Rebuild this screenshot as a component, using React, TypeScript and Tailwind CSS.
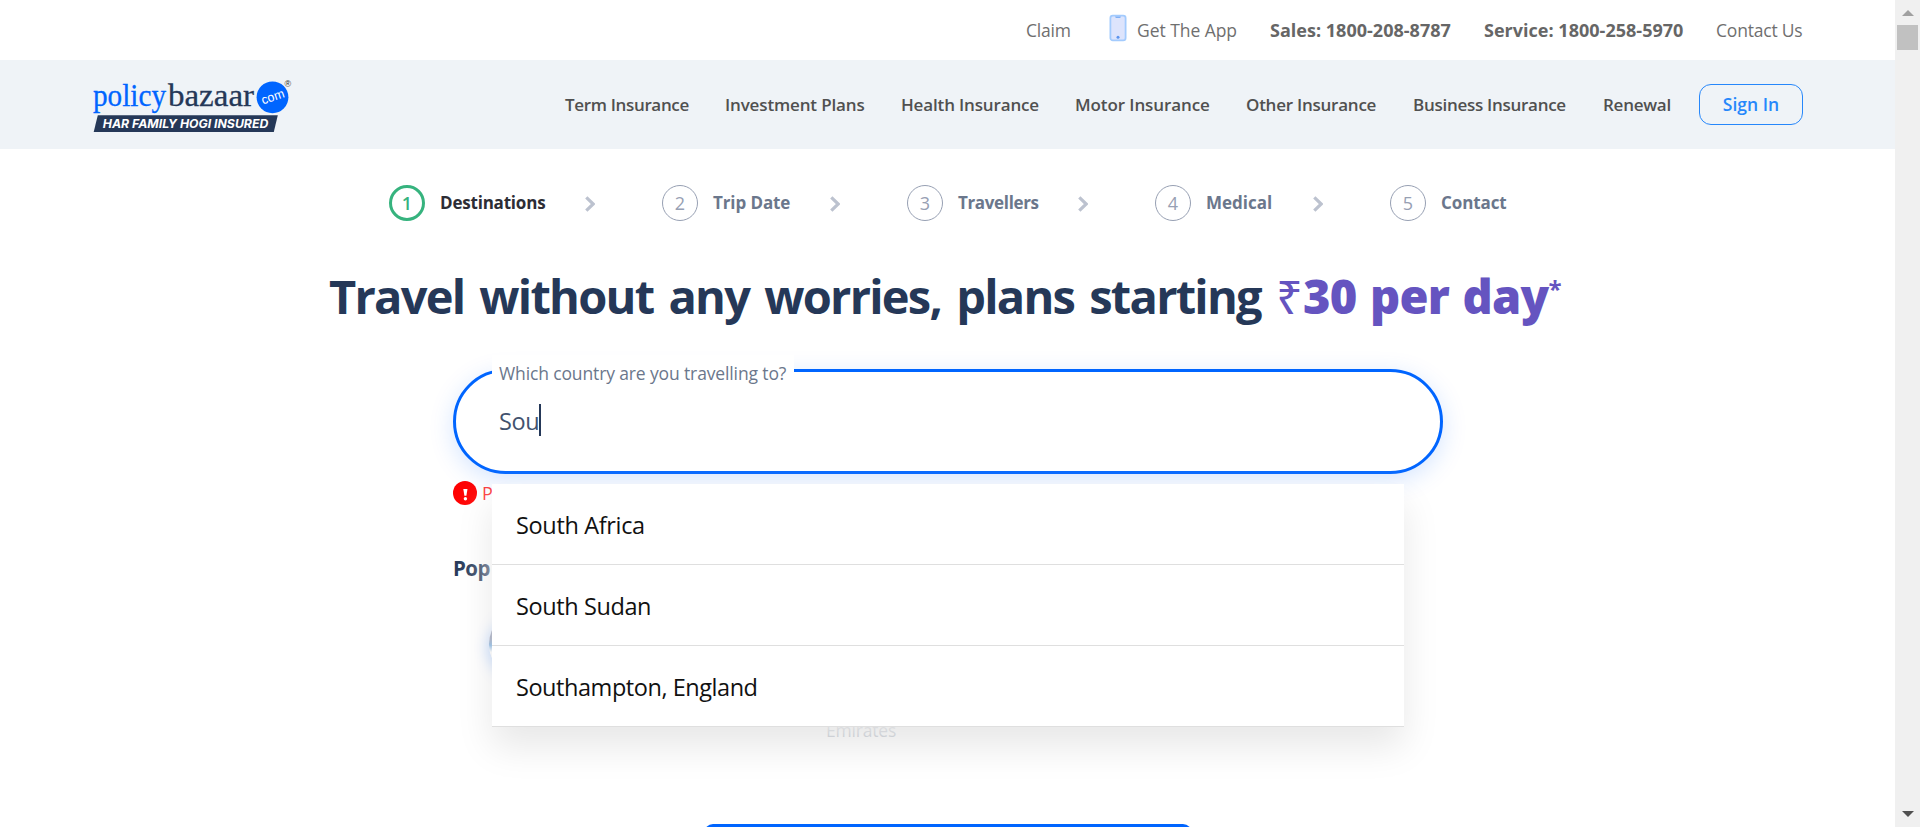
import React from "react";

const navItems = [
  { label: "Term Insurance", box: "w-[160px] tracking-[-0.34px]" },
  { label: "Investment Plans", box: "w-[176px] tracking-[-0.15px]" },
  { label: "Health Insurance", box: "w-[174px] tracking-[-0.15px]" },
  { label: "Motor Insurance", box: "w-[171px] tracking-[-0.1px]" },
  { label: "Other Insurance", box: "w-[167px] tracking-[-0.24px]" },
  { label: "Business Insurance", box: "w-[190px] tracking-[-0.28px]" },
  { label: "Renewal", box: "w-[96px] tracking-[-0.25px]" },
];

const steps = [
  { label: "Destinations", box: "w-[273px]", track: "tracking-[-0.2px]" },
  { label: "Trip Date", box: "w-[245px]", track: "tracking-[-0.1px]" },
  { label: "Travellers", box: "w-[248px]", track: "tracking-[-0.35px]" },
  { label: "Medical", box: "w-[235px]", track: "tracking-[0px]" },
  { label: "Contact", box: "w-[160px]", track: "tracking-[-0.1px]" },
];

const options = [
  { label: "South Africa", track: "tracking-[-0.35px]" },
  { label: "South Sudan", track: "tracking-[-0.4px]" },
  { label: "Southampton, England", track: "tracking-[-0.45px]" },
];

function Logo() {
  return (
    <svg className="block h-[60px] w-[200px]" viewBox="92 76 200 60">
      <text x="93" y="105.5" fontFamily="Liberation Serif, serif" fontSize="31" fill="#0065ff" stroke="#0065ff" strokeWidth="0.3" textLength="73" lengthAdjust="spacingAndGlyphs">policy</text>
      <text x="168" y="105.5" fontFamily="Liberation Serif, serif" fontSize="31" fill="#253858" stroke="#253858" strokeWidth="0.3" textLength="86" lengthAdjust="spacingAndGlyphs">bazaar</text>
      <circle cx="272.5" cy="97.3" r="15.9" fill="#0065ff" />
      <text x="272.9" y="101" textAnchor="middle" fontFamily="Liberation Sans, sans-serif" fontSize="12.5" fill="#ffffff" textLength="23.5" lengthAdjust="spacingAndGlyphs" transform="rotate(-19 272.5 97.3)">com</text>
      <text x="287.8" y="86.5" textAnchor="middle" fontFamily="Liberation Sans, sans-serif" fontSize="9" fill="#333333">®</text>
      <path d="M97.8 115.3H277.8L273.8 132H93.7Z" fill="#253858" />
      <text x="102.8" y="128.1" fontFamily="Inter, sans-serif" fontSize="12" fontWeight="700" fontStyle="italic" fill="#ffffff" textLength="165.5" lengthAdjust="spacingAndGlyphs">HAR FAMILY HOGI INSURED</text>
    </svg>
  );
}

function PhoneIcon() {
  return (
    <svg className="block h-7 w-[18px]" viewBox="0 0 18 28">
      <rect x="1.4" y="1.6" width="15.2" height="24.8" rx="2.4" fill="#dde4fc" stroke="#a3cbfd" strokeWidth="1.8" />
      <path d="M6 2.4h6l-.8 1.7H6.800Z" fill="#7fb0f5" />
      <circle cx="9" cy="23.300" r="1.500" fill="#5b94ee" />
    </svg>
  );
}

function TopBar() {
  return (
    <div className="flex h-[60px] items-center pl-[1026px] text-[17.5px] text-[#6f6f6f]">
      <span className="w-[83px] tracking-[-0.2px]">Claim</span>
      <span className="mt-[-4px] w-[28px]"><PhoneIcon /></span>
      <span className="w-[133px] tracking-[-0.05px]">Get The App</span>
      <span className="w-[214px] text-[18px] font-bold tracking-[0.02px] text-[#666666]">Sales: 1800-208-8787</span>
      <span className="w-[232px] text-[18px] font-bold tracking-[0.02px] text-[#666666]">Service: 1800-258-5970</span>
      <span className="tracking-[-0.2px]">Contact Us</span>
    </div>
  );
}

function NavBar() {
  return (
    <header className="flex h-[89px] items-center bg-[#eff3f7] pl-[92px]">
      <div className="mt-[3px] w-[473px]"><Logo /></div>
      <nav className="flex text-[17px] font-semibold text-[#505050]">
        {navItems.map((n) => (
          <a key={n.label} className={n.box}>{n.label}</a>
        ))}
      </nav>
      <button className="flex h-[41px] w-[104px] items-center justify-center rounded-[12px] border border-[#2687fb] text-[17.5px] font-semibold text-[#2687fb]">
        Sign In
      </button>
    </header>
  );
}

function Steps() {
  return (
    <ol className="flex h-[36px] pl-[389px]">
      {steps.map((s, i) => (
        <li key={s.label} className={`flex items-center ${s.box}`}>
          <span
            className={
              i === 0
                ? "flex h-9 w-9 items-center justify-center rounded-full border-[3px] border-[#36b37e] text-[18px] font-semibold text-[#36b37e]"
                : "flex h-9 w-9 items-center justify-center rounded-full border border-[#97a0b3] text-[18px] font-medium text-[#97a0b3]"
            }
          >
            {i + 1}
          </span>
          <span className={`ml-[15px] text-[17px] font-bold ${s.track} ${i === 0 ? "text-[#2d2d35]" : "text-[#6b778c]"}`}>{s.label}</span>
          {i < 4 && (
            <svg className="mt-[2px] mr-[67px] ml-auto block h-4 w-[10px]" viewBox="0 0 10 16">
              <path d="M1.300 1.300L8.200 8L1.300 14.700" fill="none" stroke="#bcc2cf" strokeWidth="3.200" />
            </svg>
          )}
        </li>
      ))}
    </ol>
  );
}

function Heading() {
  return (
    <h1 className="mt-[43px] flex h-[64px] items-center pl-[329px] text-[47px] leading-[64px] font-bold whitespace-nowrap text-[#253858]">
      <span className="w-[947px] tracking-[-1.75px] [word-spacing:4.6px]">Travel without any worries, plans starting</span>
      <span className="w-[27px] font-['Noto_Sans'] font-normal text-[#6554c0]">₹</span>
      <span className="font-extrabold tracking-[-0.75px] text-[#6554c0] [word-spacing:2px]">30 per day</span>
      <span className="mt-[-14px] text-[24px] font-bold text-[#6554c0]">*</span>
    </h1>
  );
}

function CountryField() {
  return (
    <div className="relative mt-[41px] ml-[453px] flex h-[105px] w-[990px] items-center rounded-full border-[3px] border-[#0065ff] bg-white pl-[43px] shadow-[0_6px_24px_rgba(0,101,255,0.17)]">
      <label className="absolute top-[-17px] left-[36px] flex h-[36px] w-[302px] items-center bg-white pl-[7px] text-[17.5px] tracking-[-0.13px] text-[#6b778c]">
        Which country are you travelling to?
      </label>
      <span className="mt-[-2px] text-[23.5px] leading-8 tracking-[-0.4px] text-[#42526e]">Sou</span>
      <span className="mt-[-3px] h-8 w-[2px] bg-[#253858]" />

      <ul className="absolute top-[112px] left-[36px] z-10 w-[912px] bg-white shadow-[0_20px_35px_#e8e8e8]">
        {options.map((o) => (
          <li key={o.label} className={`flex h-[81px] items-center border-b border-[#dfdfdf] pt-1 pl-[24px] text-[23.5px] text-[#111111] ${o.track}`}>
            {o.label}
          </li>
        ))}
      </ul>
    </div>
  );
}

function Popular() {
  return (
    <section className="ml-[453px] w-[990px]">
      <div className="mt-[7px] flex h-6 items-center">
        <svg className="block h-6 w-6" viewBox="0 0 24 24">
          <circle cx="12" cy="12" r="12" fill="#ff0000" />
          <path d="M10.300 8h4.200l-1.100 6.800h-2Z" fill="#ffffff" />
          <circle cx="12.400" cy="17.800" r="1.700" fill="#ffffff" />
        </svg>
        <span className="mt-px ml-[5px] text-[18px] text-[#ff3333]">P</span>
      </div>
      <h2 className="mt-[49px] text-[20.5px] leading-7 font-bold tracking-[-0.5px] text-[#253858]">Pop</h2>
      <div className="mt-[28px] ml-[36px] flex h-[68px]">
        <div className="h-[68px] w-[68px] rounded-full bg-linear-to-b from-[#7c86a5] from-42% via-[#5a9bd8] via-52% to-[#ffffff] to-62% shadow-[0_4px_14px_rgba(0,101,255,0.4)]" />
      </div>
      <p className="mt-[40px] ml-[373px] text-[17.5px] leading-6 tracking-[-0.2px] text-[#8b95a6]">Emirates</p>
      <button className="mt-[82px] ml-[251px] block h-[60px] w-[488px] rounded-[9px] bg-[#0065ff]" />
    </section>
  );
}

function Scrollbar() {
  return (
    <div className="flex h-full w-[25px] flex-col items-center bg-[#f0f0f0]">
      <svg className="mt-[10px] block h-[6px] w-[12px]" viewBox="0 0 12 6"><path d="M6 0L12 6H0Z" fill="#a0a0a0" /></svg>
      <div className="mt-[9px] h-[25px] w-[21px] bg-[#c1c1c1]" />
      <svg className="mt-auto mb-[10px] block h-[6px] w-[12px]" viewBox="0 0 12 6"><path d="M0 0H12L6 6Z" fill="#505050" /></svg>
    </div>
  );
}

export default function App() {
  return (
    <div className="flex h-[827px] w-[1920px] overflow-hidden bg-white font-['Open_Sans','Noto_Sans',sans-serif]">
      <main className="h-full w-[1895px] overflow-hidden whitespace-nowrap">
        <TopBar />
        <NavBar />
        <div className="mt-[36px]"><Steps /></div>
        <Heading />
        <CountryField />
        <Popular />
      </main>
      <Scrollbar />
    </div>
  );
}
